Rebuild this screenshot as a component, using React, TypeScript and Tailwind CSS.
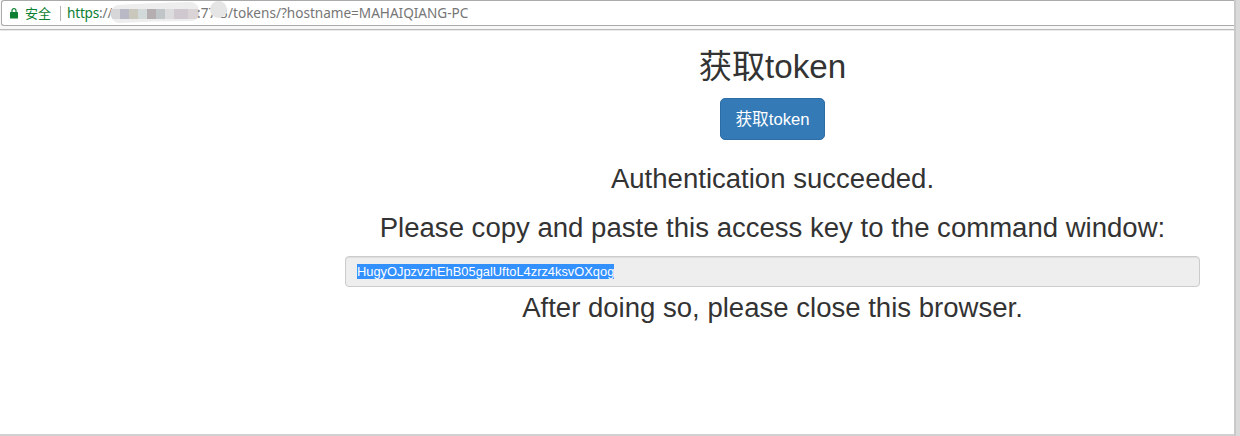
import React from "react";

const LockIcon = () => (
  <svg width="8" height="11" viewBox="0 0 8 11" className="shrink-0">
    <path d="M2 5V2.6a2 2 0 0 1 4 0V5" fill="none" stroke="#0b8033" strokeWidth="1.2" />
    <rect x="0" y="4" width="8" height="6.5" rx="0.6" fill="#0b8033" />
  </svg>
);

const RedactedHost = () => (
  <svg width="92" height="22" viewBox="0 0 92 22" className="absolute left-px top-0">
    <defs>
      <clipPath id="smudge">
        <path d="M1 15 Q-1 7 7 4 Q40 2 82 1 Q89 3 89 11 Q89 19 82 20 Q45 20 8 22 Q3 21 1 15Z" />
      </clipPath>
    </defs>
    <g clipPath="url(#smudge)">
      <rect width="92" height="22" fill="#ededed" />
      <rect x="0" y="8" width="10" height="10" fill="#d6d6d8" />
      <rect x="10" y="8" width="9" height="10" fill="#b9b9c6" />
      <rect x="19" y="8" width="9" height="10" fill="#cac7bd" />
      <rect x="28" y="8" width="9" height="10" fill="#d2d9d9" />
      <rect x="37" y="8" width="9" height="10" fill="#b4aeb0" />
      <rect x="46" y="8" width="9" height="10" fill="#c0c6c8" />
      <rect x="55" y="8" width="9" height="10" fill="#dcdcdf" />
      <rect x="64" y="8" width="14" height="10" fill="#cfc8ce" />
      <rect x="78" y="8" width="14" height="10" fill="#dbd4d7" />
    </g>
  </svg>
);

const AddressBar = () => (
  <div className="h-[31px] bg-[#f8f8f8] pl-px">
    <div className="flex h-[26px] items-center rounded-l-[3px] border-y border-l border-[#aaaaaa] bg-white pl-[8px] font-['Noto_Sans','Noto_Sans_CJK_SC',sans-serif] text-[13.6px] leading-[24px]">
      <LockIcon />
      <span className="ml-[7px] w-[26px] whitespace-nowrap text-[13px] text-[#0b8033]">安全</span>
      <span className="ml-[9px] h-[15px] w-px bg-[#b5b5b5]" />
      <span className="ml-[6px] w-[42px] whitespace-nowrap tracking-[-0.2px] text-[#767676]">
        <span className="text-[#0b8033]">https</span>://
      </span>
      <span className="relative h-[24px] w-[88px]">
        <RedactedHost />
      </span>
      <span className="relative w-[31px] whitespace-nowrap text-[#767676]">
        :77
        <span className="absolute left-[23px] top-0">3</span>
        <span className="absolute left-[13px] top-0 size-[17px] rounded-full bg-[#e5e5e5]" />
      </span>
      <span className="whitespace-nowrap tracking-[-0.02px] text-[#767676]">/tokens/?hostname=MAHAIQIANG-PC</span>
    </div>
    <div className="-ml-px mt-[3px] h-px bg-[#b9b9b9]" />
    <div className="-ml-px h-px bg-[#eaeaea]" />
  </div>
);

export default function App() {
  return (
    <div className="flex h-[436px] w-[1240px] overflow-hidden bg-[#d0d0d0] font-['Liberation_Sans','Noto_Sans_CJK_SC',sans-serif]">
      <div className="flex h-[434px] w-[1234px] flex-col bg-white">
        <AddressBar />
        <main className="ml-[345px] flex w-[855px] flex-col items-center text-[#333333]">
          <h1 className="mt-[18px] whitespace-nowrap text-[33.2px] leading-[36px]">获取token</h1>
          <button className="mt-[13px] flex h-[42px] w-[105px] items-center justify-center whitespace-nowrap rounded-[5px] border border-[#2e6da4] bg-[#337ab7] pt-[2px] text-[16.7px] leading-[22px] text-white">
            获取token
          </button>
          <h2 className="mt-[24px] whitespace-nowrap text-[27.56px] leading-[30px]">Authentication succeeded.</h2>
          <h2 className="mt-[19px] whitespace-nowrap text-[27.56px] leading-[30px]">
            Please copy and paste this access key to the command window:
          </h2>
          <div className="mt-[13px] flex h-[31px] w-full items-center rounded-[4px] border border-[#cccccc] bg-[#eeeeee] px-[11px] shadow-[inset_0_1px_1px_rgba(0,0,0,0.075)]">
            <span className="whitespace-nowrap bg-[#3390ff] text-[12.86px] leading-[15px] text-white">
              HugyOJpzvzhEhB05galUftoL4zrz4ksvOXqog
            </span>
          </div>
          <h2 className="mt-[6px] whitespace-nowrap text-[27.56px] leading-[30px]">
            After doing so, please close this browser.
          </h2>
        </main>
      </div>
      <div className="h-[436px] w-[6px] border-l-2 border-[#c9c9c9] bg-[#dadada]" />
    </div>
  );
}
